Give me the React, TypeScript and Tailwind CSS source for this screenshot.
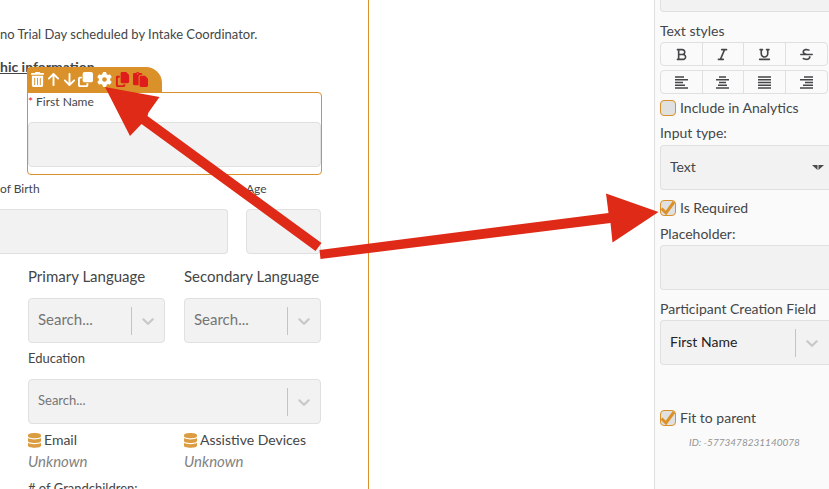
import type { ReactNode } from "react"
import {
  FaArrowDown,
  FaArrowUp,
  FaBold,
  FaClone,
  FaCopy,
  FaDatabase,
  FaGear,
  FaItalic,
  FaPaste,
  FaStrikethrough,
  FaTrashCan,
  FaUnderline,
} from "react-icons/fa6"

const field = "h-[45px] w-full border border-[#e0e0e0] bg-[#f2f2f2] outline-none"

function SearchSelect({ id, value, className = "" }: { id: string; value: string; className?: string }) {
  return (
    <div className="relative">
      <select id={id} className={`${field} appearance-none px-[9px] pb-px ${className}`}>
        <option>{value}</option>
      </select>
      <div className="pointer-events-none absolute inset-y-0 right-0 flex items-center">
        <span className="h-7 w-px bg-[#c4c4c4]" />
        <svg viewBox="0 0 20 20" className="mr-[7px] ml-[6px] size-5 fill-[#c8c8c8]">
          <path d="M4.5 7.5c.5-.5 1.1-.5 1.6 0L10 11.3l3.900-3.800c.5-.5 1.100-.5 1.600 0s.4 1.100 0 1.600l-4.700 4.500c-.4.5-1.200.5-1.600 0L4.500 9.100c-.4-.5-.4-1.100 0-1.600z" />
        </svg>
      </div>
    </div>
  )
}

function Tool({ label, children }: { label: string; children: ReactNode }) {
  return (
    <button type="button" aria-label={label} className="flex items-center justify-center">
      {children}
    </button>
  )
}

function Lines({ d }: { d: string }) {
  return (
    <svg viewBox="0 0 13 13" className="size-[13px]">
      <path d={d} fill="none" stroke="currentColor" strokeWidth="1.500" />
    </svg>
  )
}

function StyleRow({ items }: { items: { label: string; icon: ReactNode }[] }) {
  return (
    <div className="grid h-6 grid-cols-4 divide-x divide-[#e0e0e0] rounded border border-[#e0e0e0]">
      {items.map((item) => (
        <button key={item.label} type="button" aria-label={item.label} className="flex items-center justify-center">
          {item.icon}
        </button>
      ))}
    </div>
  )
}

function Check({ label, checked = false }: { label: string; checked?: boolean }) {
  return (
    <label className="flex h-4 items-center gap-1">
      <span className="relative size-4 shrink-0">
        <input
          type="checkbox"
          defaultChecked={checked}
          className="peer block size-4 appearance-none rounded border border-[#da9129] bg-[#e0e0e0]"
        />
        <svg viewBox="0 0 16 16" className="pointer-events-none absolute inset-0 hidden size-4 peer-checked:block">
          <path d="M1.500 8.500L6 13l8-11" fill="none" stroke="#da9129" strokeWidth="3" />
        </svg>
      </span>
      {label}
    </label>
  )
}

function DataField({ label }: { label: string }) {
  return (
    <div>
      <div className="flex items-center gap-[3px] leading-5">
        <svg viewBox="0 0 13 15" className="h-[15px] w-[13px] fill-[#dc9c42]">
          <path d="M0 2.200C0 .9 3 0 6.500 0S13 .9 13 2.200v1C13 4.400 10 5.200 6.500 5.200S0 4.400 0 3.200zM0 5c1.500 1.100 4 1.400 6.500 1.400S11.500 6.100 13 5v3c0 1.200-3 2-6.500 2S0 9.200 0 8zM0 9.800c1.500 1.100 4 1.400 6.500 1.400s5-.3 6.500-1.400v3c0 1.200-3 2-6.500 2s-6.500-.8-6.500-2z" />
        </svg>
        {label}
      </div>
      <div className="text-[15px] text-[#828282] italic leading-[22px]">Unknown</div>
    </div>
  )
}

function FormCanvas() {
  return (
    <main className="overflow-hidden border-r border-[#da9129] pt-6">
      <p className="text-[13px] leading-5 whitespace-nowrap">no Trial Day scheduled by Intake Coordinator.</p>
      <h2 className="mt-[13px] h-[35px] text-sm leading-5 font-bold underline">hic information</h2>

      <section className="relative ml-[27px] mr-[46px] h-[83px] rounded rounded-tl-none border border-[#da9129]">
        <div className="absolute -top-[26px] -left-px flex h-[26px] w-[135px] items-center rounded-tl rounded-tr-2xl bg-[#da9129] pl-[3px] pb-px text-white">
          <div className="flex gap-px">
            <Tool label="Delete"><FaTrashCan className="size-[15px]" /></Tool>
            <Tool label="Move up"><FaArrowUp className="size-[15px]" /></Tool>
            <Tool label="Move down"><FaArrowDown className="size-[15px]" /></Tool>
            <Tool label="Clone"><FaClone className="size-[15px]" /></Tool>
          </div>
          <div className="ml-1 flex gap-[3px] text-[#e01b1b]">
            <Tool label="Settings"><FaGear className="size-[15px] text-white" /></Tool>
            <Tool label="Copy"><FaCopy className="size-[15px]" /></Tool>
            <Tool label="Paste"><FaPaste className="size-[15px]" /></Tool>
          </div>
        </div>
        <label htmlFor="first-name" className="flex h-[29px] gap-[3px] text-xs leading-[18px]">
          <span className="text-[#e01b1b]">*</span>
          First Name
        </label>
        <input id="first-name" className={`${field} rounded`} />
      </section>

      <div className="mr-[47px] grid grid-cols-[228fr_75fr] gap-[18px] pt-[5px] text-xs">
        <div>
          <label htmlFor="birth" className="block h-[29px] leading-[18px]">of Birth</label>
          <input id="birth" className={`${field} rounded-r border-l-0`} />
        </div>
        <div>
          <label htmlFor="age" className="block h-[29px] leading-[18px]">Age</label>
          <input id="age" className={`${field} rounded`} />
        </div>
      </div>

      <div className="ml-7 mr-[47px]">
        <div className="grid grid-cols-2 gap-[19px] pt-3 text-sm whitespace-nowrap">
          <div>
            <label htmlFor="primary" className="block h-8 text-[15px] leading-5">Primary Language</label>
            <SearchSelect id="primary" value="Search..." className="rounded text-[15px] text-[#757575]" />
          </div>
          <div>
            <label htmlFor="secondary" className="block h-8 text-[15px] leading-5">Secondary Language</label>
            <SearchSelect id="secondary" value="Search..." className="rounded text-[15px] text-[#757575]" />
          </div>
        </div>

        <div className="pt-[6px] text-xs">
          <label htmlFor="education" className="block h-[30px] text-[13px] leading-[18px]">Education</label>
          <SearchSelect id="education" value="Search..." className="rounded text-[13px] text-[#757575]" />
        </div>

        <div className="grid grid-cols-2 gap-[19px] pt-[6px] text-sm whitespace-nowrap">
          <DataField label="Email" />
          <DataField label="Assistive Devices" />
        </div>
        <p className="pt-[7px] text-[13px] leading-[18px]"># of Grandchildren:</p>
      </div>
    </main>
  )
}

function SettingsPanel() {
  return (
    <aside className="overflow-hidden border-l border-[#e0e0e0] bg-[#fafafa] pl-[5px] text-sm leading-5 whitespace-nowrap">
      <div className="h-3 rounded-bl border-b border-l border-[#e0e0e0] bg-[#f2f2f2]" />
      <h3 className="pt-[9px] pb-px">Text styles</h3>
      <div className="mr-px flex flex-col gap-1">
        <StyleRow
          items={[
            { label: "Bold", icon: <FaBold className="size-[13px]" /> },
            { label: "Italic", icon: <FaItalic className="size-[13px]" /> },
            { label: "Underline", icon: <FaUnderline className="size-[13px]" /> },
            { label: "Strikethrough", icon: <FaStrikethrough className="size-[13px]" /> },
          ]}
        />
        <StyleRow
          items={[
            { label: "Align left", icon: <Lines d="M0 1h9M0 3.750h13M0 6.500h8M0 9.250h10M0 12h13" /> },
            { label: "Align center", icon: <Lines d="M3 1h7M0 3.750h13M3 6.500h7M2 9.250h9M0 12h13" /> },
            { label: "Justify", icon: <Lines d="M0 1h13M0 3.750h13M0 6.500h13M0 9.250h13M0 12h13" /> },
            { label: "Align right", icon: <Lines d="M4 1h9M0 3.750h13M5 6.500h8M3 9.250h10M0 12h13" /> },
          ]}
        />
      </div>
      <div className="pt-[6px]">
        <Check label="Include in Analytics" />
      </div>

      <label htmlFor="input-type" className="block pt-[7px] pb-[2px]">Input type:</label>
      <div className="relative">
        <select id="input-type" className={`${field} appearance-none rounded-l border-r-0 px-[9px] pb-[2px]`}>
          <option>Text</option>
        </select>
        <svg viewBox="0 0 12 5" className="pointer-events-none absolute top-5 right-[5px] h-[5px] w-3 fill-[#4a4a4a]">
          <path d="M0 0h5.500v5zM6.500 0H12L6.500 5z" />
        </svg>
      </div>
      <div className="pt-[10px]">
        <Check label="Is Required" checked />
      </div>

      <label htmlFor="placeholder" className="block pt-2 pb-[1px]">Placeholder:</label>
      <input id="placeholder" className={`${field} rounded-l border-r-0`} />

      <label htmlFor="creation-field" className="block pt-[9px] pb-[1px]">Participant Creation Field</label>
      <SearchSelect id="creation-field" value="First Name" className="rounded-l border-r-0 text-[#222]" />

      <div className="pt-[45px]">
        <Check label="Fit to parent" checked />
      </div>
      <p className="pt-[7px] text-center text-[10px] leading-[18px] text-[#949494] italic">ID: -5773478231140078</p>
    </aside>
  )
}

export default function App() {
  return (
    <div className="relative grid h-screen grid-cols-[369fr_285fr_175fr] overflow-hidden bg-white font-[Lato,sans-serif] text-[#444648]">
      <FormCanvas />
      <div />
      <SettingsPanel />
      <svg viewBox="0 0 829 489" className="pointer-events-none absolute top-0 left-0 w-full fill-[#de2a17]">
        <path d="M105 87l54.500 10-11 15.500-1 3.500 174 127-6 8-174-127-11.500 12z" />
        <path d="M319.500 250l289-37-2.500-19.500 52.500 18.500-46 30.500-2-19.500-290 36z" />
      </svg>
    </div>
  )
}
